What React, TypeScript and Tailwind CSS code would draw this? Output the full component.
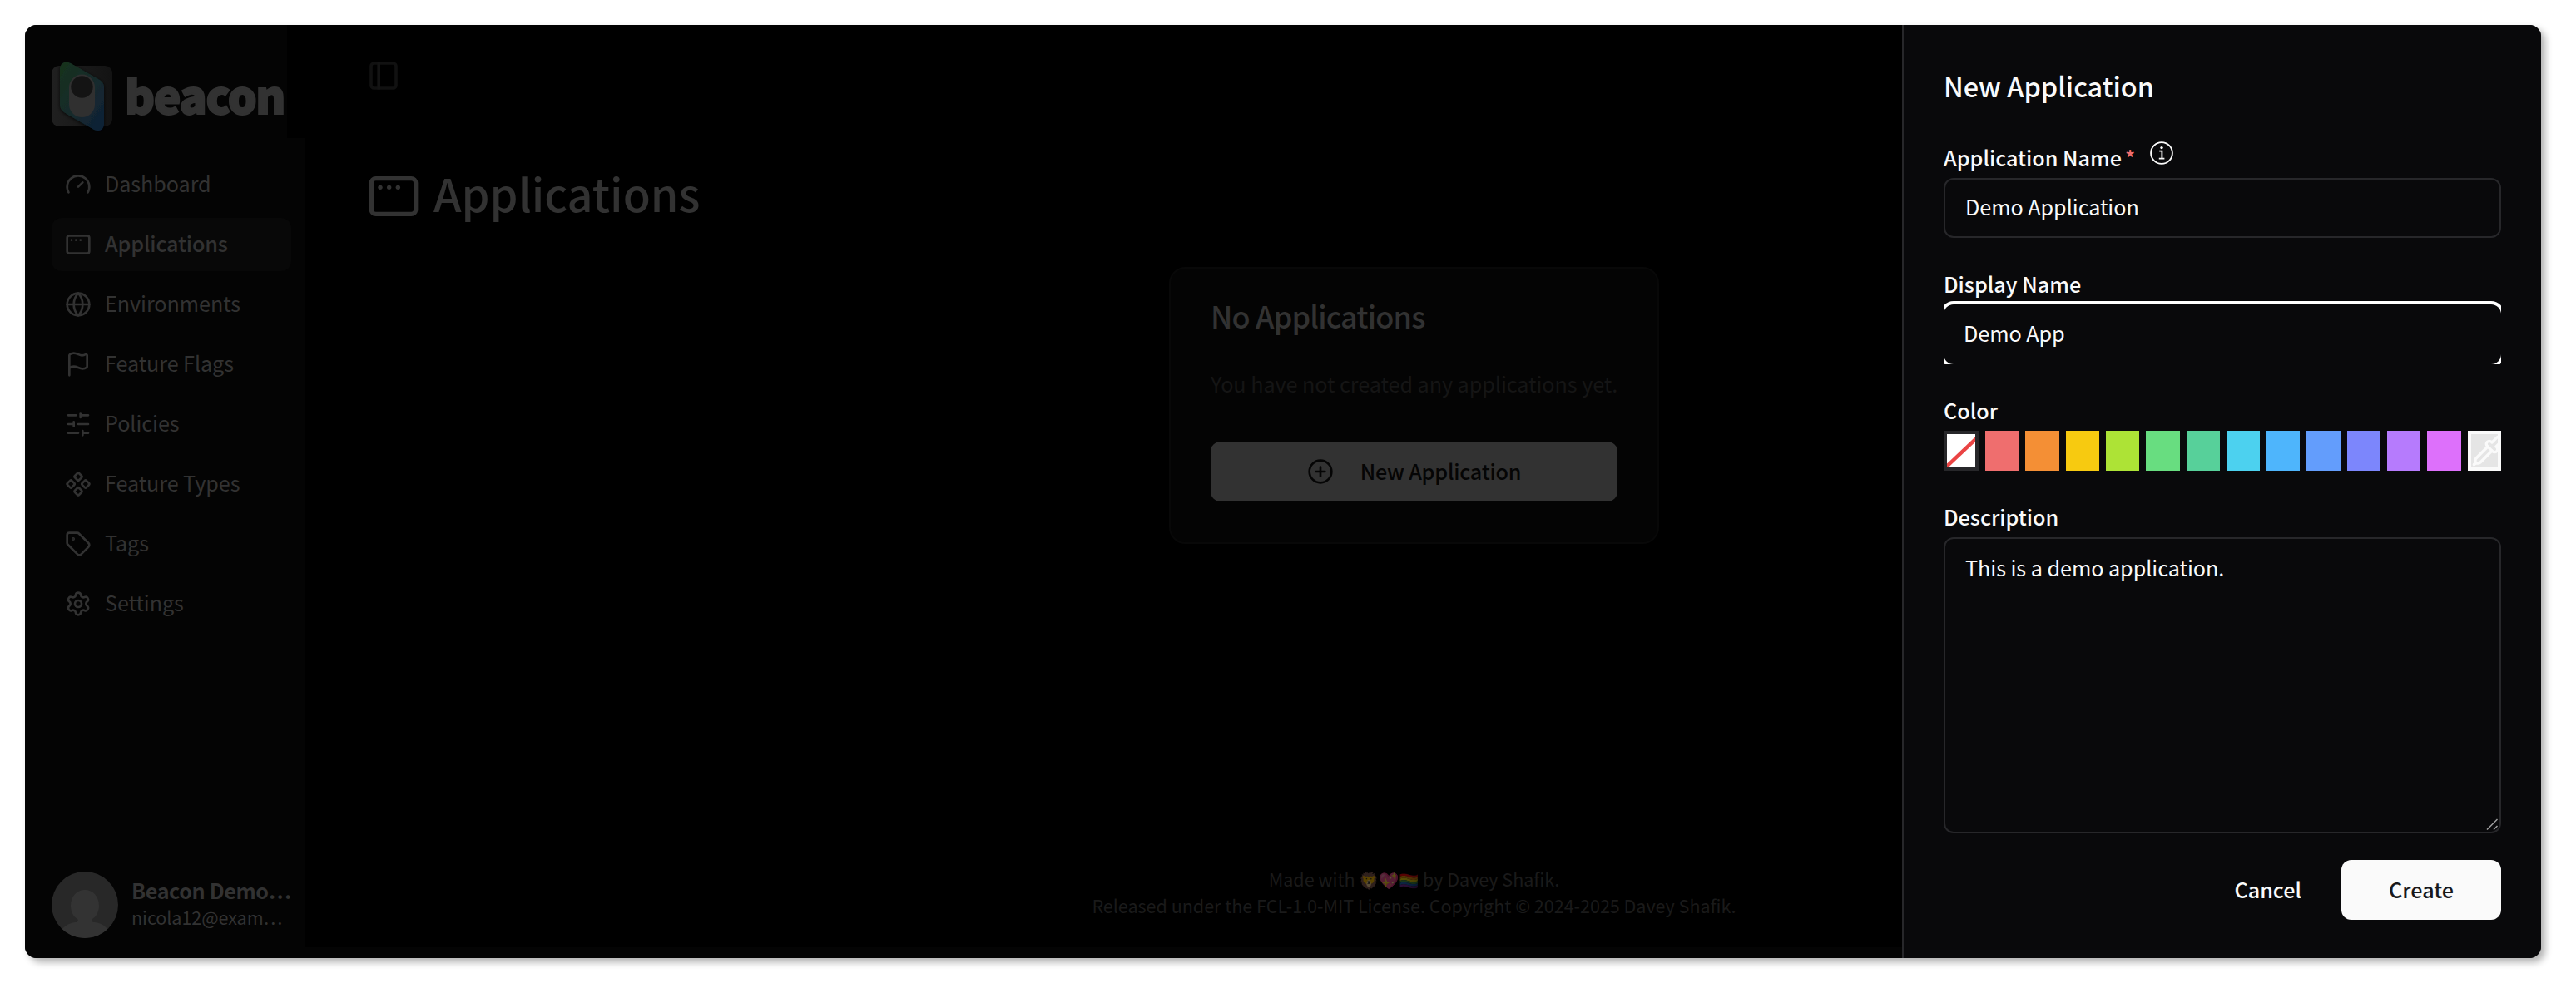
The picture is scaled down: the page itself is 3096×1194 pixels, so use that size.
import type { ReactNode } from "react";
import {
  AppWindowMac,
  CirclePlus,
  Component,
  Flag,
  Gauge,
  Globe,
  Pipette,
  Settings,
  Tag,
} from "lucide-react";

const iconClass = "size-8 shrink-0";

function SlidersIcon() {
  return (
    <svg viewBox="0 0 24 24" className={iconClass} fill="none" stroke="currentColor" strokeWidth="2" strokeLinecap="round">
      <path d="M21 4h-7M10 4H3M21 12h-9M8 12H3M21 20h-5M12 20H3M14 2v4M8 10v4M16 18v4" />
    </svg>
  );
}

const navItems: { label: string; icon: ReactNode; active?: boolean }[] = [
  { label: "Dashboard", icon: <Gauge className={iconClass} /> },
  { label: "Applications", icon: <AppWindowMac className={iconClass} />, active: true },
  { label: "Environments", icon: <Globe className={iconClass} /> },
  { label: "Feature Flags", icon: <Flag className={iconClass} /> },
  { label: "Policies", icon: <SlidersIcon /> },
  { label: "Feature Types", icon: <Component className={iconClass} /> },
  { label: "Tags", icon: <Tag className={iconClass} /> },
  { label: "Settings", icon: <Settings className={iconClass} /> },
];

const swatches = [
  "bg-[#ef6e6e]",
  "bg-[#f48f35]",
  "bg-[#f7ca10]",
  "bg-[#ade336]",
  "bg-[#68dd80]",
  "bg-[#57d09a]",
  "bg-[#4cd1ef]",
  "bg-[#4eb5fc]",
  "bg-[#639dfc]",
  "bg-[#7c86fc]",
  "bg-[#b67bfd]",
  "bg-[#dd70fb]",
];

function Logo() {
  return (
    <svg viewBox="0 0 74 88" className="-mt-2 h-[88px] w-[74px] shrink-0">
      <defs>
        <linearGradient id="plate" x1="0" y1="0" x2="1" y2="0">
          <stop offset="0" stopColor="#202020" />
          <stop offset="1" stopColor="#131313" />
        </linearGradient>
        <linearGradient id="blade" x1="0.1" y1="0.1" x2="0.9" y2="0.95">
          <stop offset="0" stopColor="#19301f" />
          <stop offset="0.5" stopColor="#162b2c" />
          <stop offset="1" stopColor="#0f2136" />
        </linearGradient>
        <filter id="blade-shadow" x="-20%" y="-20%" width="140%" height="140%">
          <feDropShadow dx="0" dy="1" stdDeviation="2" floodColor="#000000" floodOpacity="0.8" />
        </filter>
      </defs>
      <rect x="0" y="8" width="73" height="73" rx="9" fill="url(#plate)" />
      <path
        d="M10 12c0-7 6-11 13-7l33 19c4 2 7 5 7 10v44c0 7-6 10-12 7L18 66c-5-3-8-6-8-12z"
        fill="url(#blade)"
        filter="url(#blade-shadow)"
      />
      <rect x="21" y="18.5" width="31" height="51.5" rx="15.5" fill="#303030" />
      <circle cx="36.5" cy="33.5" r="13.2" fill="#141414" />
    </svg>
  );
}

function Avatar() {
  return (
    <svg viewBox="0 0 80 80" className="size-20 shrink-0">
      <clipPath id="avatar-clip">
        <circle cx="40" cy="40" r="40" />
      </clipPath>
      <g clipPath="url(#avatar-clip)">
        <rect width="80" height="80" fill="#282828" />
        <path
          d="M40 22c10 0 17 8 17 19 0 7-3 13-8 16-2 2 0 4 3 4 8 1 12 4 16 9v14H12V70c4-5 9-8 16-9 3 0 5-2 3-4-5-3-8-9-8-16 0-11 7-19 17-19z"
          fill="#333333"
        />
      </g>
    </svg>
  );
}

function PanelToggle() {
  return (
    <svg viewBox="0 0 34 34" className="ml-[3px] size-[34px]" fill="none" stroke="#111111" strokeWidth="3.6">
      <rect x="2" y="2" width="30" height="30" rx="3.5" />
      <path d="M11.2 0.5v33" stroke="#141414" />
    </svg>
  );
}

function InfoIcon() {
  return (
    <svg viewBox="0 0 28 28" className="size-7" fill="none" stroke="#fafafa" strokeWidth="1.9">
      <circle cx="14" cy="14" r="12.9" />
      <path d="M11.2 11.6h3.2v8.6M10.8 20.6h6.6" />
      <circle cx="14" cy="7.6" r="1.7" fill="#fafafa" stroke="none" />
    </svg>
  );
}

function Label({ children }: { children: ReactNode }) {
  return <div className="flex h-10 items-start text-[25.2px] leading-10 font-medium">{children}</div>;
}

function Sidebar() {
  return (
    <aside className="flex w-[336px] shrink-0 flex-col text-[#323232]">
      <div className="flex h-[136px] w-[315px] items-start gap-3.5 overflow-hidden bg-[#040404] pt-[49px] pl-8">
        <Logo />
        <span className="-mt-1 text-[55px] leading-[76px] font-black tracking-[-1.4px] [-webkit-text-stroke:2px_#323232]">
          beacon
        </span>
      </div>
      <div className="flex h-[970px] flex-col bg-[#040404] pt-6 pl-8">
        <nav className="flex w-72 flex-col gap-2">
          {navItems.map((item) => (
            <a
              key={item.label}
              className={
                item.active
                  ? "flex h-16 items-center gap-4 rounded-xl bg-[#080808] px-4 text-[25.2px] leading-10 font-medium tracking-[-0.14px]"
                  : "flex h-16 items-center gap-4 rounded-xl px-4 text-[25.2px] leading-10 tracking-[-0.08px]"
              }
            >
              {item.icon}
              <span className="pb-1">{item.label}</span>
            </a>
          ))}
        </nav>
        <div className="mt-auto flex items-center gap-4 pb-2">
          <Avatar />
          <div className="flex flex-col pb-[5px] whitespace-nowrap">
            <span className="text-[25.2px] leading-[34px] font-bold tracking-[-0.4px]">Beacon Demo…</span>
            <span className="pt-px text-[21.6px] leading-[30px] tracking-[-0.1px]">nicola12@exam…</span>
          </div>
        </div>
      </div>
      <div className="flex-1 bg-[#040404]" />
    </aside>
  );
}

function Main() {
  return (
    <main className="flex w-[1920px] shrink-0 flex-col">
      <div className="flex h-[1109px] w-[2667px] flex-col pl-[75px]">
        <div className="mt-[44px]">
          <PanelToggle />
        </div>
        <div className="mt-[96px] flex h-16 items-center gap-4 text-[#323232]">
          <AppWindowMac className="-mt-px size-16" />
          <h1 className="-mt-1 pb-1 text-[54px] leading-[64px] font-medium">Applications</h1>
        </div>
        <section className="mt-[53px] ml-[964px] flex h-[333px] w-[589px] flex-col rounded-[20px] border-2 border-[#080808] bg-[#040404] px-12 pt-8">
          <h2 className="text-[36px] leading-[48px] font-medium tracking-[-0.85px] text-[#323232]">No Applications</h2>
          <p className="mt-[38px] text-[25.2px] leading-10 tracking-[-0.06px] whitespace-nowrap text-[#151515]">
            You have not created any applications yet.
          </p>
          <button className="mt-[50px] flex h-[72px] items-center justify-center gap-8 rounded-xl bg-[#323232] pb-px text-[25.2px] font-medium tracking-[-0.2px] text-[#050505]">
            <CirclePlus className="size-8" />
            New Application
          </button>
        </section>
        <footer className="mt-auto mr-[75px] flex flex-col items-center pb-[34px] text-[21.6px] leading-8 tracking-[-0.05px] text-[#1a1a1a]">
          <p className="h-8">
            Made with <span className="text-[19.5px] opacity-35">🦁💖🏳️‍🌈</span> by Davey Shafik.
          </p>
          <p>Released under the FCL-1.0-MIT License. Copyright © 2024-2025 Davey Shafik.</p>
        </footer>
      </div>
      <div className="flex-1 bg-[#040404]" />
    </main>
  );
}

function NewApplicationPanel() {
  return (
    <aside className="flex w-[768px] shrink-0 flex-col border-l-2 border-[#27272a] bg-[#09090b] pt-[49px] pr-12 pl-12 text-[#fafafa]">
      <h2 className="text-[32.4px] leading-[48px] font-medium">New Application</h2>

      <div className="mt-[42px]">
        <Label>
          Application Name
          <span className="ml-1 text-[#ef6e6e]">*</span>
          <span className="ml-[18px] pt-px">
            <InfoIcon />
          </span>
        </Label>
      </div>
      <div className="mt-[5px] flex h-[72px] items-center rounded-xl border-2 border-[#27272a] px-6 pb-1 text-[25.2px] leading-10 tracking-[-0.05px]">
        Demo Application
      </div>

      <div className="mt-[35px]">
        <Label>Display Name</Label>
      </div>
      <div className="mt-px overflow-hidden pt-1">
        <div className="flex h-[72px] items-center rounded-xl px-6 pb-1 text-[25.2px] leading-10 tracking-[-0.05px] shadow-[0_0_0_4px_#fff]">
          Demo App
        </div>
      </div>

      <div className="mt-[35px]">
        <Label>Color</Label>
      </div>
      <div className="mt-[5px] grid h-12 grid-cols-[42px_repeat(13,minmax(0,1fr))] gap-2">
        <div className="border-4 border-[#27272a] bg-white">
          <svg viewBox="0 0 34 40" className="h-10 w-[34px]">
            <path d="M0 38.5 L36 4.5" stroke="#ea4444" strokeWidth="4.4" />
          </svg>
        </div>
        {swatches.map((color) => (
          <div key={color} className={color} />
        ))}
        <div className="flex items-center overflow-hidden border-4 border-[#fafafa] bg-[#e5e5e5]">
          <Pipette className="size-10 shrink-0 text-[#fafafa]" />
        </div>
      </div>

      <div className="mt-[35px]">
        <Label>Description</Label>
      </div>
      <div className="mt-[5px] flex h-[356px] flex-col justify-between rounded-xl border-2 border-[#27272a]">
        <p className="px-6 pt-3.5 text-[25.2px] leading-10 tracking-[-0.05px]">This is a demo application.</p>
        <svg viewBox="0 0 14 14" className="mr-0.5 mb-0.5 size-3.5 self-end" stroke="#a0a0a0" strokeWidth="1.5">
          <path d="M1 13.5L13.5 1M9 13.5L13.5 9" />
        </svg>
      </div>

      <div className="mt-8 flex justify-end gap-12 text-[25.2px] font-medium">
        <button>Cancel</button>
        <button className="h-[72px] w-48 rounded-xl bg-[#fafafa] text-[#18181b]">Create</button>
      </div>
    </aside>
  );
}

export default function App() {
  return (
    <div className="h-[1194px] w-[3096px] overflow-hidden bg-white p-[30px] font-['Noto_Sans_CJK_SC','Noto_Sans',sans-serif]">
      <div className="flex h-[1122px] w-[3024px] rounded-[14px] shadow-[5px_5px_8px_rgba(0,0,0,0.3)]">
        <div className="flex w-full overflow-hidden rounded-[14px] bg-black">
          <Sidebar />
          <Main />
          <NewApplicationPanel />
        </div>
      </div>
    </div>
  );
}
